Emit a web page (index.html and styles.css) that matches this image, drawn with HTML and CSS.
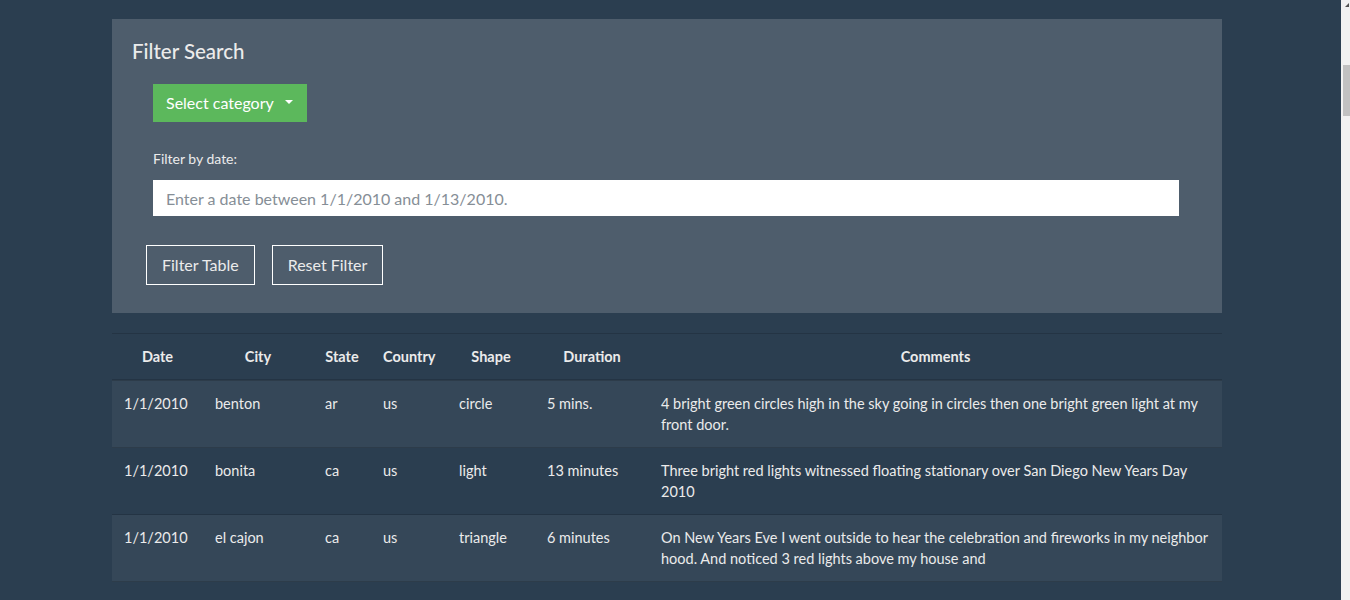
FILE: index.html
```html
<!DOCTYPE html>
<html lang="en">
<head>
<meta charset="utf-8">
<title>UFO Sightings</title>
<link rel="stylesheet" href="styles.css">
</head>
<body>
<div class="container">
  <section class="panel">
    <h2 class="panel-title">Filter Search</h2>
    <div class="category">
      <button class="btn-green" type="button">Select category <span class="caret"></span></button>
    </div>
    <form class="date-form">
      <label class="date-label" for="datetime">Filter by date:</label>
      <input class="date-input" id="datetime" type="text" placeholder="Enter a date between 1/1/2010 and 1/13/2010.">
    </form>
    <div class="actions">
      <button class="btn-outline" type="button">Filter Table</button>
      <button class="btn-outline" type="button">Reset Filter</button>
    </div>
  </section>

  <table class="ufo-table">
    <colgroup>
      <col class="c-date"><col class="c-city"><col class="c-state"><col class="c-country"><col class="c-shape"><col class="c-duration"><col class="c-comments">
    </colgroup>
    <thead>
      <tr><th>Date</th><th>City</th><th>State</th><th>Country</th><th>Shape</th><th>Duration</th><th>Comments</th></tr>
    </thead>
    <tbody>
      <tr><td>1/1/2010</td><td>benton</td><td>ar</td><td>us</td><td>circle</td><td>5 mins.</td><td>4 bright green circles high in the sky going in circles then one bright green light at my front door.</td></tr>
      <tr><td>1/1/2010</td><td>bonita</td><td>ca</td><td>us</td><td>light</td><td>13 minutes</td><td>Three bright red lights witnessed floating stationary over San Diego New Years Day 2010</td></tr>
      <tr><td>1/1/2010</td><td>el cajon</td><td>ca</td><td>us</td><td>triangle</td><td>6 minutes</td><td>On New Years Eve I went outside to hear the celebration and fireworks in my neighbor hood. And noticed 3 red lights above my house and</td></tr>
      <tr class="row-below"><td>1/1/2010</td><td>hemet</td><td>ca</td><td>us</td><td>light</td><td>2 minutes</td><td>Red lights moving slowly across the night sky over the hills.</td></tr>
    </tbody>
  </table>
</div>
<div class="scrollbar" aria-hidden="true"><span class="scroll-arrow"></span><span class="scroll-thumb"></span></div>
</body>
</html>
```

FILE: styles.css
```css
* { box-sizing: border-box; }

html, body {
  margin: 0;
  padding: 0;
}

body {
  background: #2b3e50;
  color: #ebebeb;
  font-family: Lato, "Open Sans", "Liberation Sans", sans-serif;
  font-size: 15px;
  line-height: 21px;
  padding-right: 16px;
  height: 600px;
  overflow: hidden;
}

.container {
  width: 1110px;
  margin: 0 auto;
  padding-top: 19px;
}

.panel {
  background: #4e5d6c;
  padding: 19px 20px 28px;
  height: 294px;
}

.panel-title {
  margin: 0;
  font-size: 20.5px;
  line-height: 26px;
  font-weight: 500;
  color: #ebebeb;
}

.category {
  padding-left: 21px;
  margin-top: 20px;
}

.btn-green {
  display: inline-flex;
  align-items: center;
  gap: 11px;
  height: 38px;
  padding: 0 14px 0 13px;
  background: #5cb85c;
  color: #ffffff;
  border: 0;
  border-radius: 0;
  font-family: inherit;
  font-size: 16px;
  line-height: 20px;
}

.caret {
  width: 0;
  height: 0;
  border-left: 4px solid transparent;
  border-right: 4px solid transparent;
  border-top: 4px solid #ffffff;
  margin-top: -2px;
}

.date-form {
  display: flex;
  flex-direction: column;
  padding-left: 21px;
  padding-right: 23px;
  margin-top: 28px;
}

.date-label {
  font-size: 14px;
  line-height: 18px;
  margin-bottom: 12px;
}

.date-input {
  height: 36px;
  border: 0;
  border-radius: 0;
  padding: 0 13px;
  font-family: inherit;
  font-size: 16px;
  background: #ffffff;
  color: #495057;
}

.date-input::placeholder {
  color: #868e96;
}

.actions {
  display: flex;
  gap: 17px;
  margin-top: 29px;
  padding-left: 14px;
}

.btn-outline {
  height: 40px;
  padding: 0 15px;
  background: transparent;
  border: 1px solid #ffffff;
  border-radius: 0;
  color: #ebebeb;
  font-family: inherit;
  font-size: 16px;
  line-height: 20px;
}

.ufo-table {
  width: 1110px;
  margin-top: 20px;
  border-collapse: collapse;
  table-layout: fixed;
}

.c-date { width: 91px; }
.c-city { width: 110px; }
.c-state { width: 58px; }
.c-country { width: 76px; }
.c-shape { width: 88px; }
.c-duration { width: 114px; }
.c-comments { width: 573px; }

.ufo-table th,
.ufo-table td {
  padding: 12px;
  vertical-align: top;
  border-top: 1px solid rgba(0, 0, 0, 0.15);
}

.ufo-table th {
  text-align: center;
  font-weight: 700;
  font-size: 14.5px;
  border-bottom: 2px solid rgba(0, 0, 0, 0.15);
}

.ufo-table td {
  text-align: left;
  font-size: 14.5px;
}

.ufo-table tbody tr:nth-child(odd) {
  background: rgba(255, 255, 255, 0.05);
}

.row-below td {
  padding-top: 15px;
}

.scrollbar {
  position: fixed;
  top: 0;
  right: 0;
  width: 9px;
  height: 600px;
  background: #f1f1f1;
}

.scroll-arrow {
  position: absolute;
  top: 3px;
  right: 1px;
  width: 0;
  height: 0;
  border-left: 4px solid transparent;
  border-bottom: 4px solid #505050;
}

.scroll-thumb {
  position: absolute;
  top: 65px;
  right: 0;
  width: 7px;
  height: 51px;
  background: #c1c1c1;
}
```
